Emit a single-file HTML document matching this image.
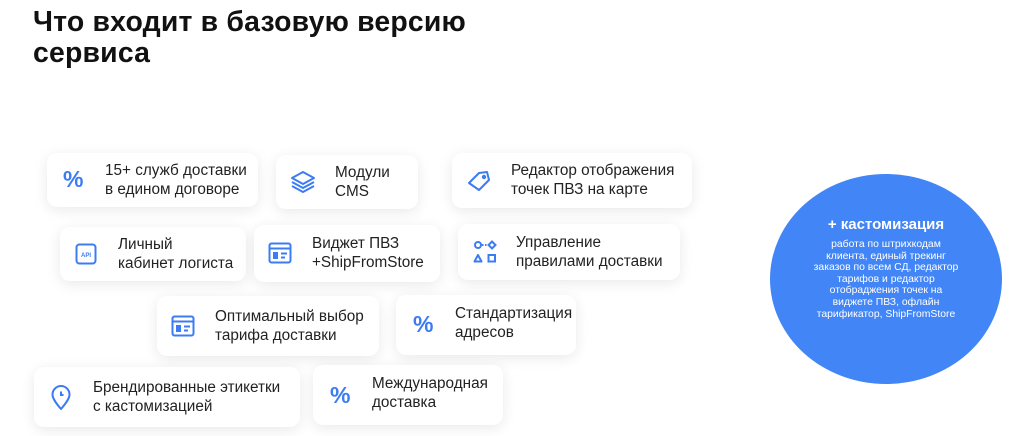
<!DOCTYPE html>
<html><head><meta charset="utf-8"><style>
*{margin:0;padding:0;box-sizing:border-box}
body{width:1024px;height:436px;background:#fff;position:relative;overflow:hidden;font-family:"Liberation Sans","DejaVu Sans",sans-serif;color:#1e1e1e}
h1{position:absolute;left:33px;top:7px;font-size:28.4px;line-height:31px;font-weight:700;color:#111;letter-spacing:0.2px}
.c{position:absolute;background:#fff;border-radius:10px;box-shadow:0 3px 14px rgba(0,0,0,0.09);display:flex;align-items:center}
.c svg{position:absolute;}
.t{position:absolute;font-size:15.3px;line-height:19px;white-space:nowrap;color:#222}
.pc{position:absolute;color:#3b7cf4;font-size:23px;font-weight:700;line-height:1}
.circ{position:absolute;left:770px;top:174px;width:232px;height:210px;border-radius:50%;background:#4285f6;color:#fff;text-align:center}
.circ b{position:absolute;left:0;right:0;top:42px;font-size:15px}
.circ p{position:absolute;left:0;right:0;top:65px;font-size:10.4px;line-height:11.6px}
</style></head><body>
<h1>Что входит в базовую версию<br>сервиса</h1>

<div class="c" style="left:47px;top:153px;width:211px;height:54px"><span class="pc" style="left:16px;top:15px">%</span><span class="t" style="left:58px;top:8px">15+ служб доставки<br>в едином договоре</span></div>

<div class="c" style="left:276px;top:155px;width:142px;height:54px">
<svg style="left:14px;top:15px" width="26" height="24" viewBox="0 0 26 24" fill="none" stroke="#3b7cf4" stroke-width="2" stroke-linejoin="round"><path d="M13 2 L24 8 L13 14 L2 8 Z"/><path d="M2 12 L13 18 L24 12"/><path d="M2 16 L13 22 L24 16"/></svg>
<span class="t" style="left:59px;top:8px">Модули<br>CMS</span></div>

<div class="c" style="left:452px;top:153px;width:240px;height:55px">
<svg style="left:14px;top:16px" width="26" height="24" viewBox="0 0 26 24" fill="none" stroke="#3b7cf4" stroke-width="2" stroke-linejoin="round"><path d="M3 14 L13 4 L21 3 L23 11 L13 21 Z"/><circle cx="18" cy="8" r="1.2" fill="#3b7cf4"/></svg>
<span class="t" style="left:59px;top:8px">Редактор отображения<br>точек ПВЗ на карте</span></div>

<div class="c" style="left:60px;top:227px;width:186px;height:54px">
<svg style="left:15px;top:16px" width="22" height="22" viewBox="0 0 22 22" fill="none"><rect x="1.5" y="1.5" width="19" height="19" rx="3" stroke="#3b7cf4" stroke-width="2"/><text x="11" y="14" font-size="6" font-family="Liberation Sans" font-weight="700" fill="#3b7cf4" text-anchor="middle">API</text></svg>
<span class="t" style="left:58px;top:8px">Личный<br>кабинет логиста</span></div>

<div class="c" style="left:254px;top:225px;width:186px;height:57px">
<svg style="left:14px;top:17px" width="24" height="22" viewBox="0 0 24 22" fill="none" stroke="#3b7cf4" stroke-width="2"><rect x="1.5" y="1.5" width="21" height="19" rx="2"/><path d="M1.5 6.5 H22.5"/><rect x="5" y="10" width="5" height="7" fill="#3b7cf4" stroke="none"/><path d="M13 11.5 H19 M13 15.5 H17"/></svg>
<span class="t" style="left:58px;top:9px">Виджет ПВЗ<br>+ShipFromStore</span></div>

<div class="c" style="left:458px;top:224px;width:222px;height:56px">
<svg style="left:15px;top:16px" width="24" height="24" viewBox="0 0 24 24" fill="none" stroke="#3b7cf4" stroke-width="2"><circle cx="5" cy="5" r="3"/><path d="M19 1.5 L22.5 5 L19 8.5 L15.5 5 Z"/><path d="M9 5 H14" stroke-dasharray="1.5 1.5"/><path d="M5 15 L8.5 21.5 H1.5 Z" stroke-linejoin="round"/><rect x="15.5" y="15" width="6.5" height="6.5"/></svg>
<span class="t" style="left:58px;top:9px">Управление<br>правилами доставки</span></div>

<div class="c" style="left:157px;top:296px;width:222px;height:60px">
<svg style="left:14px;top:19px" width="24" height="22" viewBox="0 0 24 22" fill="none" stroke="#3b7cf4" stroke-width="2"><rect x="1.5" y="1.5" width="21" height="19" rx="2"/><path d="M1.5 6.5 H22.5"/><rect x="5" y="10" width="5" height="7" fill="#3b7cf4" stroke="none"/><path d="M13 11.5 H19 M13 15.5 H17"/></svg>
<span class="t" style="left:58px;top:11px">Оптимальный выбор<br>тарифа доставки</span></div>

<div class="c" style="left:396px;top:295px;width:180px;height:60px"><span class="pc" style="left:17px;top:18px">%</span><span class="t" style="left:59px;top:9px">Стандартизация<br>адресов</span></div>

<div class="c" style="left:34px;top:367px;width:266px;height:60px">
<svg style="left:17px;top:18px" width="20" height="26" viewBox="0 0 20 26" fill="none" stroke="#3b7cf4" stroke-width="2"><path d="M10 24 C4 17 1.5 13 1.5 9.5 A8.5 8.5 0 0 1 18.5 9.5 C18.5 13 16 17 10 24 Z" stroke-linejoin="round"/><path d="M10 6.5 V10 H12.5"/></svg>
<span class="t" style="left:59px;top:11px">Брендированные этикетки<br>с кастомизацией</span></div>

<div class="c" style="left:313px;top:365px;width:190px;height:60px"><span class="pc" style="left:17px;top:19px">%</span><span class="t" style="left:59px;top:9px">Международная<br>доставка</span></div>

<div class="circ"><b>+ кастомизация</b><p>работа по штрихкодам<br>клиента, единый трекинг<br>заказов по всем СД, редактор<br>тарифов и редактор<br>отобраджения точек на<br>виджете ПВЗ, офлайн<br>тарификатор, ShipFromStore</p></div>
</body></html>
